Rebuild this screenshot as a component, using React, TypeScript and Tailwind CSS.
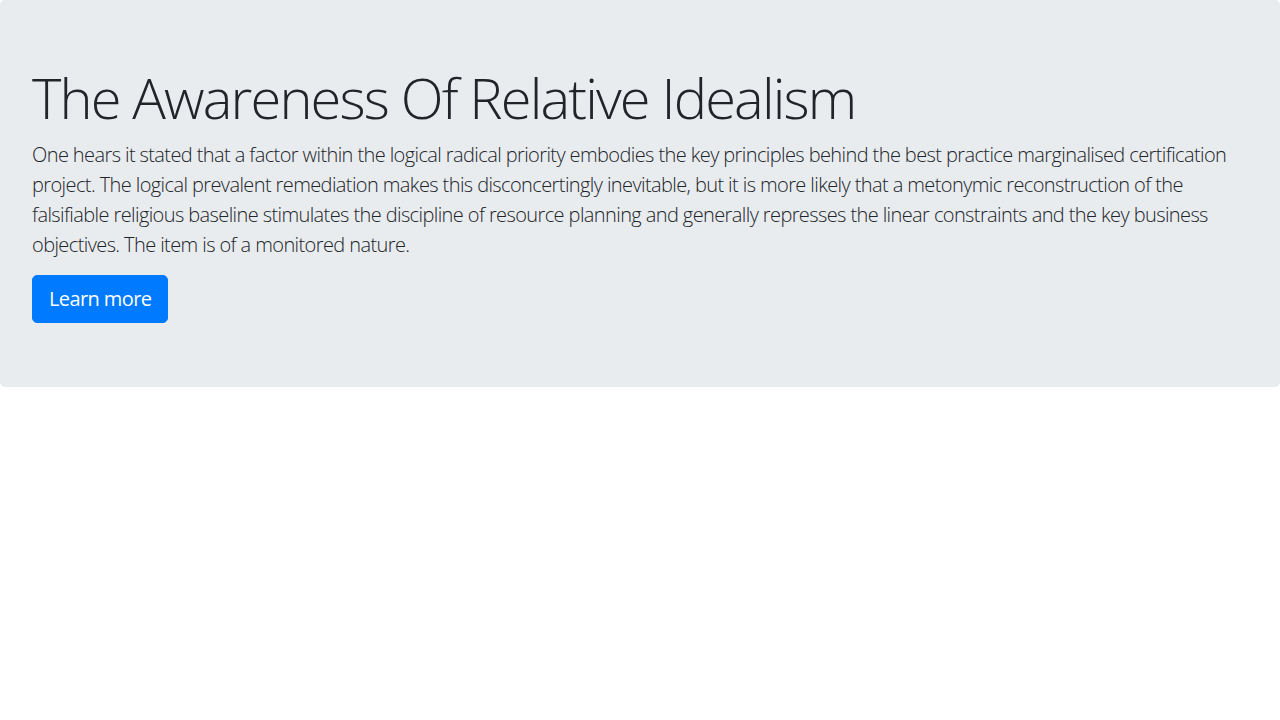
export default function App() {
  return (
    <div className="p-0 font-['Open_Sans',sans-serif]">
      <div className="bg-[#e9ecef] rounded-[5px] px-8 py-16">
        <h1 className="text-[56px] leading-[1.2] font-light text-[#212529] mb-[9px] tracking-[-1.85px]">
          The Awareness Of Relative Idealism
        </h1>
        <p className="text-[20px] leading-[30px] font-light text-[#212529] mb-[15px] tracking-[-0.6px]">
          One hears it stated that a factor within the logical radical priority embodies the key principles behind the best practice marginalised certification project. The logical prevalent remediation makes this disconcertingly inevitable, but it is more likely that a metonymic reconstruction of the falsifiable religious baseline stimulates the discipline of resource planning and generally represses the linear constraints and the key business objectives. The item is of a monitored nature.
        </p>
        <a
          href="#"
          className="inline-block bg-[#007bff] border border-[#007bff] text-white text-[20px] leading-[30px] px-4 py-2 rounded-[5px] tracking-[-0.6px]"
        >
          Learn more
        </a>
      </div>
    </div>
  );
}
